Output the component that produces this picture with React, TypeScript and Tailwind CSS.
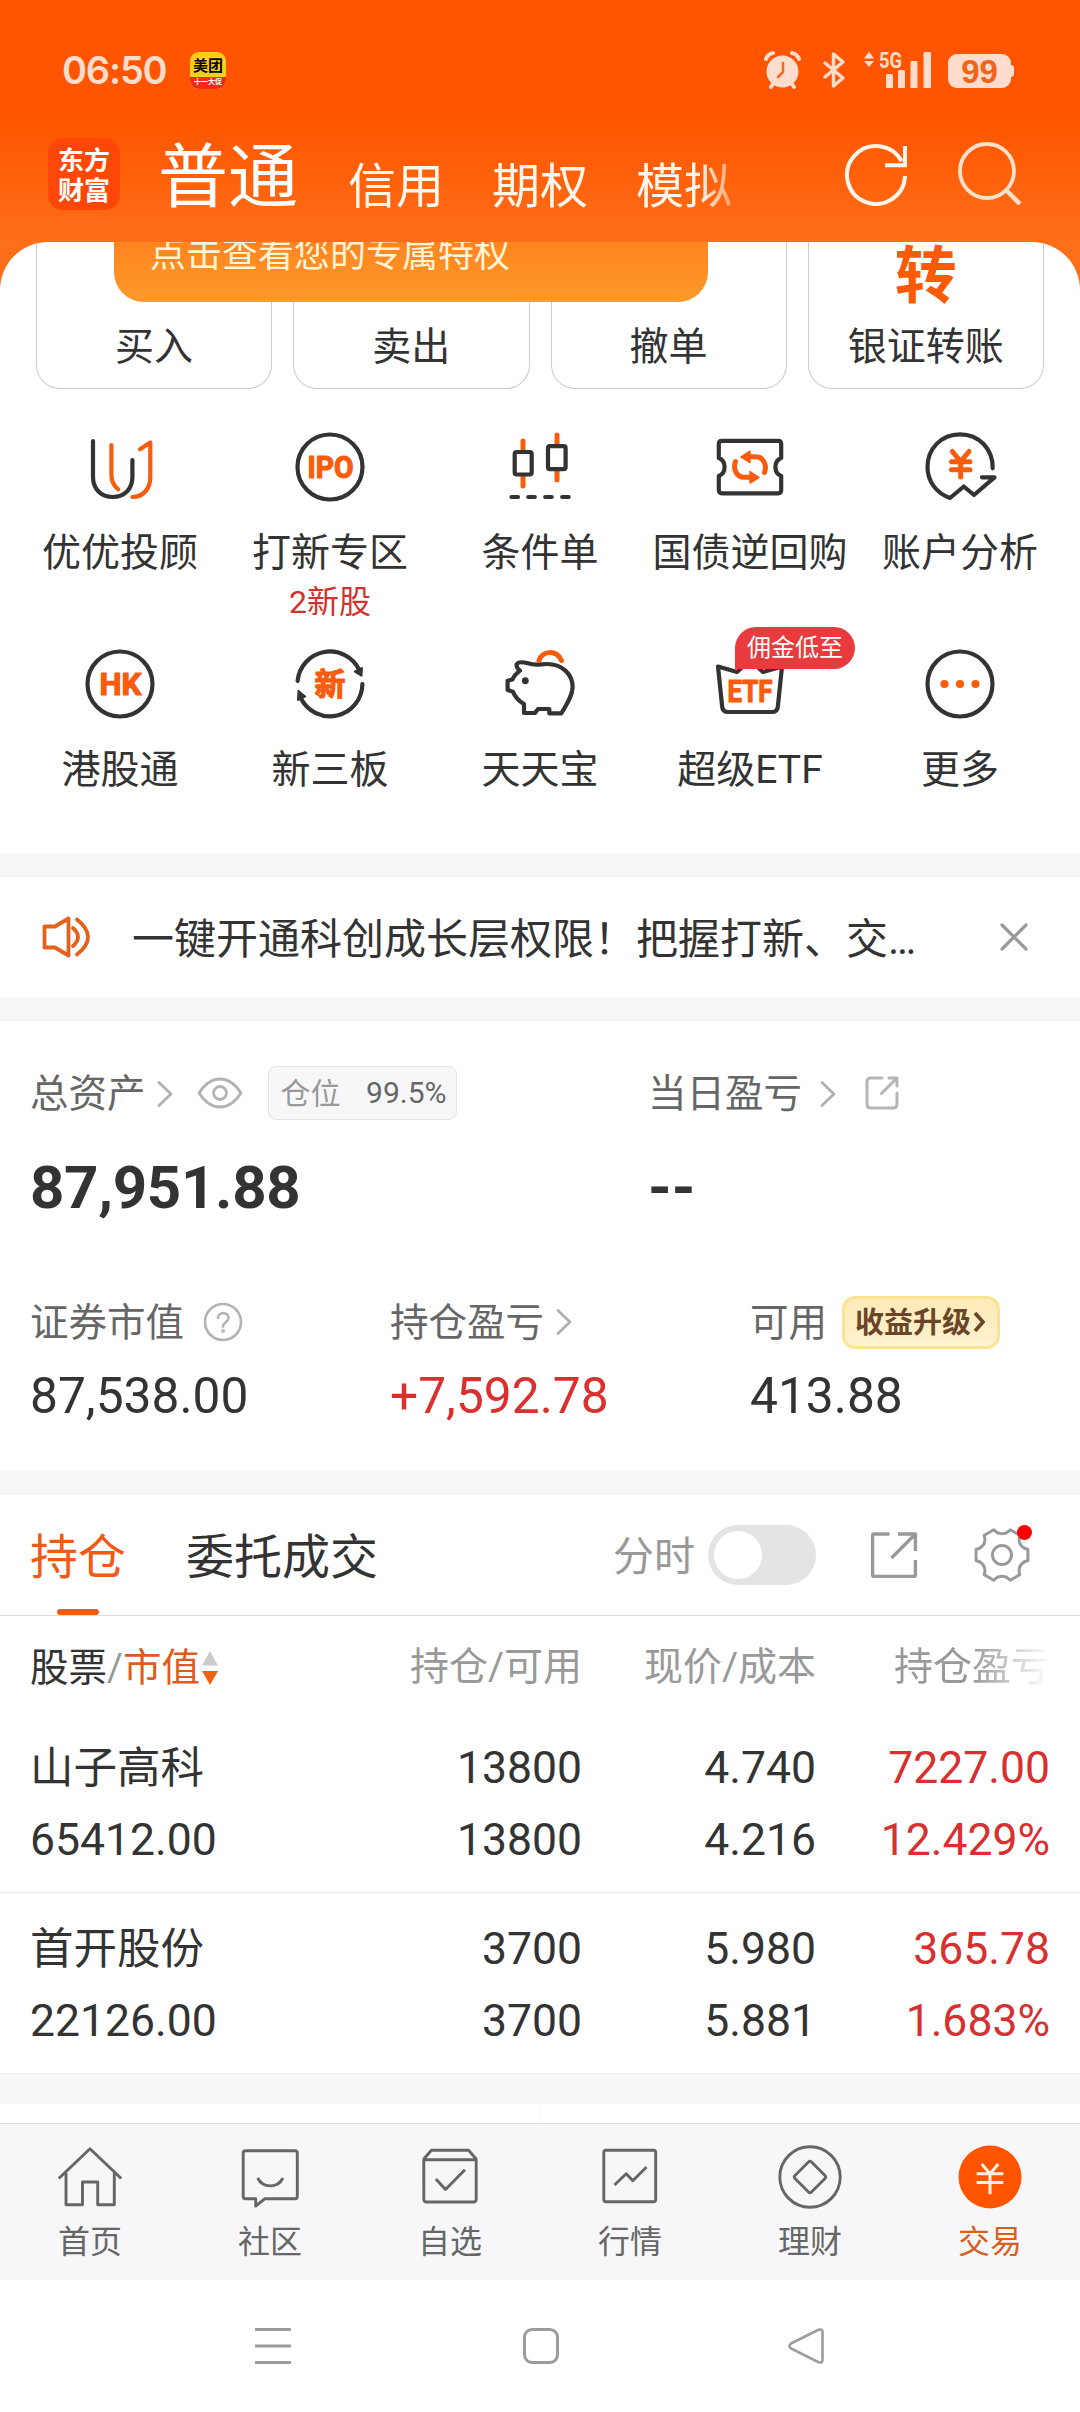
import type { ReactNode } from 'react';

const DARK = '#333333';
const ORANGE = '#f85c0c';

function Icon({ children }: { children: ReactNode }) {
  return (
    <svg className="h-20 w-20" viewBox="0 0 80 80" fill="none" stroke={DARK} strokeWidth="4.2" strokeLinecap="round" strokeLinejoin="round">
      {children}
    </svg>
  );
}

function Label({ text, x, y, width, size }: { text: string; x: number; y: number; width?: number; size: number }) {
  return (
    <text x={x} y={y} textAnchor="middle" textLength={width} lengthAdjust="spacingAndGlyphs" fill={ORANGE} stroke={ORANGE} strokeWidth="1.2" fontSize={size} fontWeight="700">
      {text}
    </text>
  );
}

const icons: Record<string, ReactNode> = {
  advisor: (
    <Icon>
      <path d="M13 14V50C13 62 21 70 32.7 70S52.4 62 52.4 50V33" />
      <path stroke={ORANGE} d="M31.4 18V48C31.4 55 34 59 38.3 62.3M60 22.3L70.3 15.5V50C70.3 62 63 70 52.4 70" />
    </Icon>
  ),
  ipo: (
    <Icon>
      <circle cx="40" cy="40" r="32.5" />
      <Label text="IPO" x={40.5} y={51} width={46} size={31} />
    </Icon>
  ),
  candles: (
    <Icon>
      <path stroke={ORANGE} strokeWidth="5" d="M23 14V23M23 50V59M57 8V17M57 45V53" />
      <rect x="14.7" y="25" width="17" height="22.5" rx="2" />
      <rect x="48" y="19.2" width="17.6" height="23" rx="2" />
      <path d="M11.5 70h6.5M28.3 70h6.5M45.2 70h6.5M62.2 70h6.5" />
    </Icon>
  ),
  repo: (
    <Icon>
      <path d="M12 13.8H68Q71.2 13.8 71.2 17V31C63.5 34 63.5 46 71.2 49V63Q71.2 66.3 68 66.3H12Q8.8 66.3 8.8 63V49C16.5 46 16.5 34 8.8 31V17Q8.8 13.8 12 13.8Z" />
      <path stroke={ORANGE} strokeWidth="5" d="M25.5 34.5C22.5 42 27 50.3 34 50.3H42M54.5 45.5C57.5 38 53 29.8 46 29.8H38" />
      <path stroke={ORANGE} fill={ORANGE} strokeWidth="1.5" d="M40 44.5L49 50.5L40 56ZM40 24.2L31 29.8L40 35.6Z" />
    </Icon>
  ),
  account: (
    <Icon>
      <path d="M72.7 41.3C73 22 59 7.3 40 7.3C21 7.3 7.5 22 7.5 40C7.5 54 16 66 30 71L43.8 59.5L54 68L74.5 50.3H62" />
      <path stroke={ORANGE} strokeWidth="5" d="M32.3 24.5L40.7 34.5L49 24.5M40.7 35V50M31.5 34.7H50M31.5 42.7H50" />
    </Icon>
  ),
  hk: (
    <Icon>
      <circle cx="40" cy="40" r="32.5" />
      <Label text="HK" x={40.5} y={51} width={42} size={31} />
    </Icon>
  ),
  neeq: (
    <Icon>
      <path d="M7.6 37A32.500 32.500 0 0 1 69.300 26M72.400 40A32.500 32.500 0 0 1 10.700 54" />
      <path fill={DARK} strokeWidth="1.5" d="M64.500 27.500L72.200 23.800L71.700 32ZM15.500 52.500L7.800 56.200L8.300 46.500Z" />
      <Label text="新" x={40} y={51} size={31} />
    </Icon>
  ),
  pig: (
    <Icon>
      <path d="M16.600 20.500C18 17.500 24 18.300 28 19.300C36 22 40 20 47 20C62 20 72.600 30 72.600 43C72.600 50 69 57 61.300 69.300H49.300V65H38L35 69H24V60C19 57 15 53 13 47.700L7.600 46V36.700L12.500 35.500C14 31.500 17 29 20 26.700Q16 23 16.600 20.500Z" />
      <circle cx="25.3" cy="36.7" r="2.2" fill={DARK} strokeWidth="2.5" />
      <path stroke={ORANGE} strokeWidth="5" d="M39 16.500C42 7 56 5 61.500 16.500" />
    </Icon>
  ),
  etf: (
    <Icon>
      <path d="M8 22.500L27 28L40 16L53 28L72 22.500L67.800 63Q67.300 68 62 68H18Q12.700 68 12.200 63Z" />
      <Label text="ETF" x={40} y={57.5} width={45} size={31} />
    </Icon>
  ),
  more: (
    <Icon>
      <circle cx="40" cy="40" r="32.5" />
      <g fill={ORANGE} stroke="none">
        <circle cx="24.5" cy="40" r="4.1" />
        <circle cx="40" cy="40" r="4.1" />
        <circle cx="55.5" cy="40" r="4.1" />
      </g>
    </Icon>
  ),
};

const shortcuts = [
  { icon: 'advisor', name: '优优投顾' },
  { icon: 'ipo', name: '打新专区', note: '2新股' },
  { icon: 'candles', name: '条件单' },
  { icon: 'repo', name: '国债逆回购' },
  { icon: 'account', name: '账户分析' },
  { icon: 'hk', name: '港股通' },
  { icon: 'neeq', name: '新三板' },
  { icon: 'pig', name: '天天宝' },
  { icon: 'etf', name: '超级ETF', badge: '佣金低至' },
  { icon: 'more', name: '更多' },
];

const actions = [
  { name: '买入' },
  { name: '卖出' },
  { name: '撤单' },
  { name: '银证转账', glyph: '转' },
];

const holdings = [
  { name: '山子高科', value: '65412.00', qty: '13800', avail: '13800', price: '4.740', cost: '4.216', pnl: '7227.00', pct: '12.429%' },
  { name: '首开股份', value: '22126.00', qty: '3700', avail: '3700', price: '5.980', cost: '5.881', pnl: '365.78', pct: '1.683%' },
];

const tabs: { name: string; active?: boolean; art: ReactNode }[] = [
  { name: '首页', art: <path d="M.8 33.500L32 3.800L63.200 33.500M8 28V59.700H24.500V37H39.700V59.700H56.300V28" /> },
  {
    name: '社区',
    art: <path d="M7.500 5.700H57Q59.300 5.700 59.300 8V51.500Q59.300 53.700 57 53.700H27L17.700 61V53.700H7.500Q5.200 53.700 5.200 51.500V8Q5.200 5.700 7.500 5.700ZM19.600 33C25 43.500 39.600 43.500 45 33" />,
  },
  {
    name: '自选',
    art: <path d="M5.800 14.700H58.200V54Q58.200 57 55.500 57H8.500Q5.800 57 5.800 54ZM5.800 14L13.400 5.300H50.600L58.200 14M17.900 34L27.500 44.500L47 24.700" />,
  },
  {
    name: '行情',
    art: <path d="M8 5.300H55.500Q57.700 5.300 57.700 7.500V54.500Q57.700 56.700 55.500 56.700H8Q5.800 56.700 5.800 54.500V7.500Q5.800 5.300 8 5.300ZM16.500 40L28.200 28.700L34.800 35.700L48.500 22" />,
  },
  {
    name: '理财',
    art: (
      <>
        <circle cx="32" cy="32" r="30.2" />
        <path d="M30.500 17L17 30.500Q15.500 32 17 33.500L30.500 47Q32 48.500 33.500 47L47 33.500Q48.500 32 47 30.500L33.500 17Q32 15.500 30.500 17Z" />
      </>
    ),
  },
  {
    name: '交易',
    active: true,
    art: (
      <>
        <circle cx="32" cy="32" r="31.5" fill="#ff5500" stroke="none" />
        <path stroke="#fff1e6" strokeWidth="3" d="M23.700 19L32 28.700L40.300 19M32 28.700V49.300M18.600 28.700H45.400M18.600 37.500H45.400" />
      </>
    ),
  },
];

const gearPath = (() => {
  const pt = (deg: number, r: number) => {
    const a = (deg * Math.PI) / 180;
    return `${(28 + r * Math.cos(a)).toFixed(2)} ${(28 + r * Math.sin(a)).toFixed(2)}`;
  };
  let d = `M${pt(-12, 26.5)}`;
  for (let k = 0; k < 6; k++) {
    const a = k * 60;
    d += `L${pt(a + 12, 26.5)}Q${pt(a + 18, 22.5)} ${pt(a + 22, 22)}Q${pt(a + 30, 20.5)} ${pt(a + 38, 22)}Q${pt(a + 42, 22.5)} ${pt(a + 48, 26.5)}`;
  }
  return d + 'Z';
})();

function Chevron() {
  return (
    <svg className="h-7 w-4 shrink-0" viewBox="0 0 16 28" fill="none" stroke="#b0b0b0" strokeWidth="2.8" strokeLinecap="round" strokeLinejoin="round">
      <path d="M2 2.500L14 14L2 25.500" />
    </svg>
  );
}

function StatusBar() {
  return (
    <div className="flex h-[122px] items-start pt-[50px] text-[#ffdccb]">
      <div className="ml-[62px] w-[104px] font-[Inter] text-[38px] font-semibold leading-[40px] tracking-[-1.2px]">06:50</div>
      <div className="ml-6 mt-0.5 flex h-[37px] w-9 flex-col items-center overflow-hidden rounded-[9px] bg-[#ffd012] font-bold">
        <span className="mt-[4px] h-[21px] text-[15px] leading-[20px] text-black">美团</span>
        <span className="h-[12px] w-full bg-[#f52a1c] text-center text-[7px] leading-[11px] text-white">十一大促</span>
      </div>
      <svg className="ml-[538px] h-10 w-10" viewBox="0 0 40 40" fill="none" stroke="currentColor" strokeLinecap="round">
        <circle cx="18.5" cy="21.5" r="16" fill="currentColor" stroke="none" />
        <path strokeWidth="4" d="M2 9Q4 4 9 3M35 9Q33 4 28 3M9 34L7 37M28 34L30 37" />
        <path stroke="#f26a22" strokeWidth="2.5" strokeLinejoin="round" d="M19 13V22L14 27" />
      </svg>
      <svg className="ml-[18px] h-10 w-6" viewBox="0 0 24 40" fill="none" stroke="currentColor" strokeWidth="3.4" strokeLinecap="round" strokeLinejoin="round">
        <path d="M3 13L21 28L11.500 36V4L21 12L3 27" />
      </svg>
      <svg className="ml-[18px] h-10 w-[72px]" viewBox="0 0 72 40" fill="currentColor">
        <path d="M0 8.500L5 1.500L10 8.500ZM0 11L5 17L10 11ZM22 25.500a1.500 1.500 0 0 1 1.500-1.500h4a1.500 1.500 0 0 1 1.500 1.500V38H22ZM34 21.500a1.500 1.500 0 0 1 1.500-1.500h4a1.500 1.500 0 0 1 1.500 1.500V38H34ZM46.500 12.500a1.500 1.500 0 0 1 1.500-1.500h4a1.500 1.500 0 0 1 1.500 1.500V38H46.500ZM59.500 3.500a1.500 1.500 0 0 1 1.500-1.500h4.500a1.500 1.500 0 0 1 1.500 1.500V38H59.500Z" />
        <text x="15" y="17.5" fontSize="22" fontWeight="700" textLength="23" lengthAdjust="spacingAndGlyphs">5G</text>
      </svg>
      <div className="ml-[12px] mt-1 flex items-center">
        <div className="flex h-[34px] w-[63px] items-center justify-center rounded-[9px] bg-current font-['Liberation_Sans'] text-[33px] font-bold leading-none">
          <span className="text-[#f2641c]">99</span>
        </div>
        <div className="h-3 w-[3px] rounded-r bg-current" />
      </div>
    </div>
  );
}

export default function App() {
  return (
    <div className="h-[2412px] w-[1080px] overflow-hidden bg-white font-[Roboto,'Noto_Sans_CJK_SC',sans-serif] text-[#333333]">
      <header className="h-[242px] bg-[linear-gradient(to_bottom,#ff5500_0,#ff5500_118px,#ff6e19_242px)]">
        <StatusBar />
        <div className="flex h-[120px] items-start">
          <div className="ml-12 mt-4 flex h-[72px] w-[72px] flex-col items-center justify-center rounded-[15px] bg-[#ff4808] font-['Noto_Sans_CJK_SC'] text-[26px] font-bold leading-[30px] text-white">
            <span className="h-[30px]">东方</span>
            <span className="h-[30px]">财富</span>
          </div>
          <nav className="ml-[38px] flex h-[96px] w-[600px] items-end text-[48px] leading-[48px] text-[#fff6ec] [mask-image:linear-gradient(to_right,black_540px,transparent_600px)]">
            <span className="mb-[5px] mr-[50px] w-[140px] text-[70px] leading-[70px] text-white">普通</span>
            <span className="mb-[7px] mr-12">信用</span>
            <span className="mb-[7px] mr-12">期权</span>
            <span className="mb-[7px]">模拟</span>
          </nav>
          <svg className="ml-[86px] mt-5 h-16 w-16" viewBox="0 0 64 64" fill="none" stroke="#fff5ea" strokeWidth="4">
            <path d="M61 34A29 29 0 1 1 57.600 19.300M61 4V23.300H41" />
          </svg>
          <svg className="ml-[50px] mt-5 h-16 w-16" viewBox="0 0 64 64" fill="none" stroke="#ffe0c8" strokeWidth="3.8">
            <circle cx="29" cy="29" r="27" />
            <path strokeWidth="4.5" d="M48 48L62 62" />
          </svg>
        </div>
      </header>

      <div className="bg-[#ff6e19]">
        <section className="relative h-[611px] overflow-hidden rounded-t-[48px] bg-white">
          <div className="grid grid-cols-4 gap-[21px] px-9">
            {actions.map((a) => (
              <div key={a.name} className="flex h-[147px] flex-col items-center justify-end overflow-hidden rounded-b-[24px] border border-t-0 border-[#cccccc] pb-[15px]">
                {a.glyph && <span className="h-[86px] text-[62px] font-bold leading-[70px] text-[#fd5a08]">{a.glyph}</span>}
                <span className="text-[39px] leading-[52px]">{a.name}</span>
              </div>
            ))}
          </div>
          <div className="absolute left-[114px] top-0 h-[60px] w-[594px] overflow-hidden rounded-b-[30px] bg-gradient-to-b from-[#ff8420] to-[#fd9a2a] pl-[36px] text-[36px] leading-[32px] text-[#fff4d6]">
            <span className="-mt-[3px] block">点击查看您的专属特权</span>
          </div>
          <div className="mt-[38px] grid grid-cols-5 px-[15px]">
            {shortcuts.map((s) => (
              <div key={s.name} className="relative flex h-[217px] flex-col items-center">
                {icons[s.icon]}
                <span className="mt-[22px] whitespace-nowrap text-[39px] leading-[48px]">{s.name}</span>
                {s.note && <span className="text-[32px] leading-[50px] text-[#d3322e]">{s.note}</span>}
                {s.badge && (
                  <span className="absolute left-[90px] top-[-17px] h-[42px] w-[120px] rounded-[21px] rounded-bl-none bg-[#e93b3d] text-center text-[24px] leading-[43px] text-white">
                    {s.badge}
                  </span>
                )}
              </div>
            ))}
          </div>
        </section>
      </div>

      <section className="border-y-[24px] border-[#f7f7fa]">
        <div className="flex h-[120px] items-center">
          <svg className="ml-[42px] h-12 w-12" viewBox="0 0 48 48" fill="none" stroke="#e4601c" strokeWidth="3.8" strokeLinejoin="round" strokeLinecap="round">
            <path d="M2.500 13.500H13L26.500 5.500V42.500L13 34.500H2.500ZM31 15Q41 24 31 33M35 6.500Q57 24 35 41.500" />
          </svg>
          <p className="ml-[42px] mt-[5px] w-[810px] whitespace-nowrap text-[42px] leading-[60px]">一键开通科创成长层权限！把握打新、交…</p>
          <svg className="ml-[58px] h-7 w-7" viewBox="0 0 28 28" stroke="#999999" strokeWidth="3.2" strokeLinecap="round">
            <path d="M2 2L26 26M26 2L2 26" />
          </svg>
        </div>
      </section>

      <section className="h-[450px] px-[30px] pt-[42px] text-[#666666]">
        <div className="flex h-[60px] items-center text-[38.5px] leading-none">
          <div className="flex w-[618px] items-center">
            <span className="mt-[3px]">总资产</span>
            <span className="ml-[11px] mt-[2px] flex"><Chevron /></span>
            <svg className="ml-[24px] h-8 w-[46px]" viewBox="0 0 46 32" fill="none" stroke="#b3b3b3" strokeWidth="2.8">
              <path d="M2 16Q11 2 23 2T44 16Q35 30 23 30T2 16Z" strokeLinejoin="round" />
              <circle cx="23" cy="16" r="6.5" />
            </svg>
            <div className="ml-[25px] flex h-[54px] w-[189px] items-center justify-between rounded-lg border border-[#e4e4e6] bg-[#f7f7fa] pl-[12px] pr-[9px] text-[30px]">
              <span className="mt-[2px] text-[#999999]">仓位</span>
              <span>99.5%</span>
            </div>
          </div>
          <span className="mt-[3px]">当日盈亏</span>
          <span className="ml-[18px] mt-[2px] flex"><Chevron /></span>
          <svg className="ml-[28px] h-9 w-9" viewBox="0 0 36 36" fill="none" stroke="#b5b5b5" strokeWidth="3" strokeLinecap="round" strokeLinejoin="round">
            <path d="M18 3H7Q3 3 3 7V29Q3 33 7 33H29Q33 33 33 29V18M25 3H33V11M33 3L17.500 18.500" />
          </svg>
        </div>
        <div className="mt-[35px] flex h-[60px] items-center text-[60px] font-bold leading-none text-[#333333]">
          <span className="w-[618px] tracking-[-0.3px]">87,951.88</span>
          <span>--</span>
        </div>
        <div className="mt-[74px] grid h-[60px] grid-cols-[360px_360px_300px] items-center text-[38.5px] leading-none">
          <div className="flex items-center">
            <span className="mt-[3px]">证券市值</span>
            <svg className="ml-[19px] h-10 w-10" viewBox="0 0 40 40" fill="none" stroke="#b3b3b3" strokeWidth="2.6">
              <circle cx="20" cy="20" r="18" />
              <path strokeLinecap="round" d="M15 16C15 9.500 25.500 9.500 25.500 16C25.500 20 20 20 20 24.500" />
              <circle cx="20" cy="29" r="0.7" />
            </svg>
          </div>
          <div className="flex items-center">
            <span className="mt-[3px]">持仓盈亏</span>
            <span className="ml-[12px] flex"><Chevron /></span>
          </div>
          <div className="flex items-center">
            <span className="mt-[3px]">可用</span>
            <div className="ml-[15px] flex h-[53px] w-[158px] items-center rounded-[13px] border-[3px] border-[#f9e591] bg-gradient-to-b from-[#fdeab8] to-[#fff2cf] pl-[10px] text-[29px] font-bold text-[#6a4527]">
              <span className="mt-[2px] w-[118px]">收益升级</span>
              <svg className="h-5 w-3" viewBox="0 0 12 20" fill="none" stroke="#6a4527" strokeWidth="3.6">
                <path d="M2 1L10 10L2 19" />
              </svg>
            </div>
          </div>
        </div>
        <div className="mt-[20px] grid h-[50px] grid-cols-[360px_360px_300px] items-center text-[49.7px] leading-none text-[#333333]">
          <span>87,538.00</span>
          <span className="text-[#db3030]">+7,592.78</span>
          <span>413.88</span>
        </div>
      </section>

      <section className="border-t-[24px] border-[#f7f7fa]">
        <div className="flex h-[121px] items-center border-b border-[#dddddd] px-[30px] text-[48px] leading-none">
          <div className="relative flex h-full items-center text-[#f05a12]">
            <span className="mt-[5px]">持仓</span>
            <span className="absolute bottom-0 left-[27px] h-[6px] w-[42px] rounded-full bg-[#f25a10]" />
          </div>
          <span className="ml-[60px] mt-[5px]">委托成交</span>
          <span className="ml-[235px] mt-[5px] text-[41px] text-[#999999]">分时</span>
          <div className="ml-[13px] flex h-[60px] w-[108px] items-center rounded-full bg-[#e4e4e6] p-[6px]">
            <span className="h-12 w-12 rounded-full bg-white" />
          </div>
          <svg className="ml-[54px] h-12 w-12" viewBox="0 0 48 48" fill="none" stroke="#999999" strokeWidth="3.4" strokeLinejoin="round">
            <path d="M19.500 3H4Q2.600 3 2.600 4.500V44Q2.600 45.400 4 45.400H44Q45.400 45.400 45.400 44V29M28 3H45.400V20M45.400 3L21.500 27" />
          </svg>
          <div className="relative ml-[56px]">
            <svg className="h-14 w-14" viewBox="0 0 56 56" fill="none" stroke="#999999" strokeWidth="3" strokeLinejoin="round">
              <path d={gearPath} />
              <circle cx="28" cy="28" r="9.5" />
            </svg>
            <span className="absolute right-[-2px] top-[-2px] h-[15px] w-[15px] rounded-full bg-[#fe0000]" />
          </div>
        </div>

        <div className="grid h-24 grid-cols-[318px_234px_234px_234px] items-start px-[30px] pt-[31px] text-right text-[39px] leading-[41px] text-[#999999]">
          <div className="flex h-[41px] items-center text-left text-[38.5px]">
            <span className="text-[#333333]">股票</span>
            <span>/</span>
            <span className="text-[#dd5c1c]">市值</span>
            <svg className="ml-[2px] h-9 w-4" viewBox="0 0 16 36">
              <path fill="#cccccc" d="M8 1L16 15.500H0Z" />
              <path fill="#f46014" d="M8 35L0 21H16Z" />
            </svg>
          </div>
          <span>持仓/可用</span>
          <span>现价/成本</span>
          <span className="[mask-image:linear-gradient(to_right,black_155px,transparent_234px)]">持仓盈亏</span>
        </div>

        {holdings.map((h) => (
          <div
            key={h.name}
            className="grid h-[181px] grid-cols-[318px_234px_234px_234px] grid-rows-[72px_72px] border-b border-[#ebebed] px-[30px] pt-[20px] text-right text-[44.5px] leading-[72px]"
          >
            <span className="pt-[1px] text-left text-[43.5px]">{h.name}</span>
            <span>{h.qty}</span>
            <span>{h.price}</span>
            <span className="text-[#d63030]">{h.pnl}</span>
            <span className="text-left">{h.value}</span>
            <span>{h.avail}</span>
            <span>{h.cost}</span>
            <span className="text-[#d63030]">{h.pct}</span>
          </div>
        ))}
        <div className="h-[30px] bg-[#f7f8fa]" />
        <div className="flex h-[19px]">
          <div className="w-[540px] border-r border-[#f7f7f7]" />
        </div>
      </section>

      <nav className="grid h-[157px] grid-cols-6 border-t border-[#dfdfe1] bg-[#f7f7fa] pt-[21px]">
        {tabs.map((t) => (
          <div key={t.name} className={`flex flex-col items-center ${t.active ? 'text-[#d8601f]' : 'text-[#666666]'}`}>
            <svg className="h-16 w-16" viewBox="0 0 64 64" fill="none" stroke="#666666" strokeWidth="2.9" strokeLinejoin="round">
              {t.art}
            </svg>
            <span className="mt-[13px] text-[32px] leading-[40px]">{t.name}</span>
          </div>
        ))}
      </nav>

      <div className="flex h-[132px] items-center text-[#9c9c9c]">
        <svg className="ml-[254px] h-10 w-[38px]" viewBox="0 0 38 40" stroke="currentColor" strokeWidth="3">
          <path d="M1 3.500H37M1 20H37M1 36.500H37" />
        </svg>
        <div className="ml-[231px] h-9 w-9 rounded-[9px] border-[3px] border-current" />
        <svg className="ml-[229px] h-9 w-9" viewBox="0 0 36 36" fill="none" stroke="currentColor" strokeWidth="2.6">
          <path d="M3 15.500L30.500 1.800Q34.500 .500 34.500 4V32Q34.500 35.500 30.500 34.200L3 20.500Q0 18 3 15.500Z" />
        </svg>
      </div>
    </div>
  );
}
